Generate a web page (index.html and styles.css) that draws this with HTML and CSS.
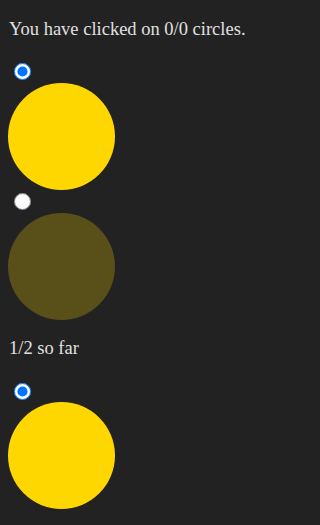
FILE: index.html
```html
<!DOCTYPE html>
<html>
<head>
<meta charset="utf-8">
<link rel="stylesheet" href="styles.css">
</head>
<body>
<p class="status">You have clicked on 0/0 circles.</p>
<div class="item">
  <input class="pick" type="radio" name="c1" checked>
  <div class="circle"></div>
</div>
<div class="item">
  <input class="pick" type="radio" name="c2">
  <div class="circle dim"></div>
</div>
<p class="status">1/2 so far</p>
<div class="item">
  <input class="pick" type="radio" name="c3" checked>
  <div class="circle"></div>
</div>
</body>
</html>
```
FILE: styles.css
```css
html {
  background: #222222;
}
body {
  margin: 0;
  padding: 18.5px 0 0 9px;
  background: #222222;
  color: #e0e0e0;
  font-family: "Liberation Serif", "Times New Roman", serif;
  font-size: 18.5px;
}
.status {
  margin: 18.5px 0 24.5px;
  line-height: 20px;
}
.status:first-child {
  margin-top: 0;
}
.item {
  display: flex;
  flex-direction: column;
  align-items: flex-start;
  gap: 2.5px;
  margin-bottom: 3.5px;
  margin-left: -1px;
}
.pick {
  width: 17px;
  height: 17px;
  margin: 0 0 0 6px;
}
.circle {
  width: 107px;
  height: 107px;
  border-radius: 50%;
  background: #ffd700;
}
.circle.dim {
  opacity: 0.25;
}
```
